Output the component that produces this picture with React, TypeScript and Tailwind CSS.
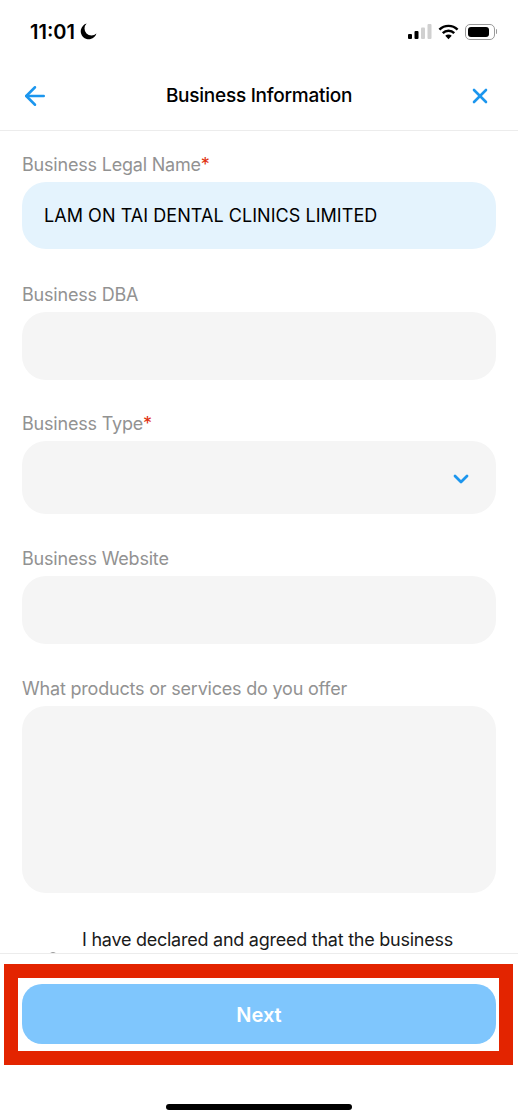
import { ArrowLeft, X, ChevronDown } from "lucide-react";

const Field = ({
  label,
  required,
  boxClass,
  children,
}: {
  label: string;
  required?: boolean;
  boxClass: string;
  children?: React.ReactNode;
}) => (
  <div className="flex flex-col">
    <div className="h-[22px] text-[18px] leading-[22px] text-[#929292] tracking-[-0.2px]">
      {label}
      {required && <span className="text-[#e0300f]">*</span>}
    </div>
    <div className={`mt-[6px] rounded-[24px] flex items-center px-[22px] ${boxClass}`}>
      {children}
    </div>
  </div>
);

const StatusBar = () => (
  <div className="h-[62px] flex items-center justify-between pl-[30px] pr-[21px] pt-[1px]">
    <div className="flex items-center gap-[5px]">
      <span className="text-[20px] leading-none font-semibold text-black">11:01</span>
      <svg width="17" height="17" viewBox="0 0 17 17">
        <path d="M6.6 0.6A8 8 0 1 0 16.4 10.6 7 7 0 0 1 6.6 0.6Z" fill="#000" />
      </svg>
    </div>
    <div className="flex items-center gap-[6px]">
      <svg width="24" height="15" viewBox="0 0 24 15">
        <rect x="0" y="10" width="4" height="5" rx="1" fill="#000" />
        <rect x="6.5" y="7" width="4" height="8" rx="1" fill="#000" />
        <rect x="13" y="3.5" width="4" height="11.5" rx="1" fill="#d0d0d0" />
        <rect x="19.5" y="0" width="4" height="15" rx="1" fill="#d0d0d0" />
      </svg>
      <svg width="21" height="16" viewBox="0 0 22 16">
        <path d="M1.5 5.5a13.5 13.5 0 0 1 19 0" fill="none" stroke="#000" strokeWidth="2.6" />
        <path d="M5 9.2a8.6 8.6 0 0 1 12 0" fill="none" stroke="#000" strokeWidth="2.6" />
        <path d="M7.6 12 11 15.5 14.4 12a4.8 4.8 0 0 0-6.8 0Z" fill="#000" />
      </svg>
      <div className="flex items-center gap-[1px]">
        <div className="w-[30px] h-[16px] rounded-[5px] border border-[#9a9a9a] p-[2px]">
          <div className="w-[21px] h-full rounded-[3px] bg-black" />
        </div>
        <div className="w-[1.5px] h-[5px] bg-[#9a9a9a] rounded-r-sm" />
      </div>
    </div>
  </div>
);

export default function App() {
  return (
    <div className="relative h-[1120px] w-[518px] overflow-hidden bg-white flex flex-col font-['Inter','Liberation_Sans',sans-serif]">
      <StatusBar />

      <div className="h-[69px] flex items-center justify-between px-[20px] border-b border-[#ececec]">
        <ArrowLeft className="w-[30px] h-[30px] text-[#1c96ee]" strokeWidth={2} />
        <h1 className="text-[19px] font-medium text-black tracking-[-0.25px]">Business Information</h1>
        <X className="w-[24px] h-[24px] mr-[6px] text-[#1c96ee]" strokeWidth={2.6} />
      </div>

      <div className="flex-1 overflow-hidden px-[22px] pt-[23px] flex flex-col">
        <Field label="Business Legal Name" required boxClass="h-[67px] bg-[#e4f3fd]">
          <span className="text-[18px] text-black tracking-[0.05px]">LAM ON TAI DENTAL CLINICS LIMITED</span>
        </Field>
        <div className="mt-[35px]">
          <Field label="Business DBA" boxClass="h-[68px] bg-[#f5f5f5]" />
        </div>
        <div className="mt-[33px]">
          <Field label="Business Type" required boxClass="h-[73px] bg-[#f5f5f5] justify-end !px-[23px]">
            <ChevronDown className="w-[24px] h-[24px] mt-[2px] text-[#1c96ee]" strokeWidth={2.8} />
          </Field>
        </div>
        <div className="mt-[34px]">
          <Field label="Business Website" boxClass="h-[68px] bg-[#f5f5f5]" />
        </div>
        <div className="mt-[34px]">
          <Field label="What products or services do you offer" boxClass="h-[187px] bg-[#f5f5f5]" />
        </div>
        <div className="mt-[36px] relative pl-[60px] text-[18px] leading-[22px] text-[#1a1a1a] tracking-[-0.25px]">
          I have declared and agreed that the business
          <div className="absolute left-[26px] top-[23px] w-[10px] h-[10px] rounded-full border border-[#9a9a9a]" />
        </div>
      </div>

      <div className="h-[167px] relative z-10 bg-white border-t border-[#ececec] px-[22px] pt-[30px]">
        <button className="w-full h-[60px] rounded-[20px] bg-[#7fc6fd] text-white text-[20px] font-semibold pt-[2px]">
          Next
        </button>
        <div className="absolute left-[166px] bottom-[10px] w-[186px] h-[6px] rounded-full bg-black" />
      </div>

      {/* annotation round the button */}
      <div className="absolute z-20 left-[4px] top-[964px] w-[509px] h-[101px] border-[14px] border-[#e32400] pointer-events-none" />
    </div>
  );
}
